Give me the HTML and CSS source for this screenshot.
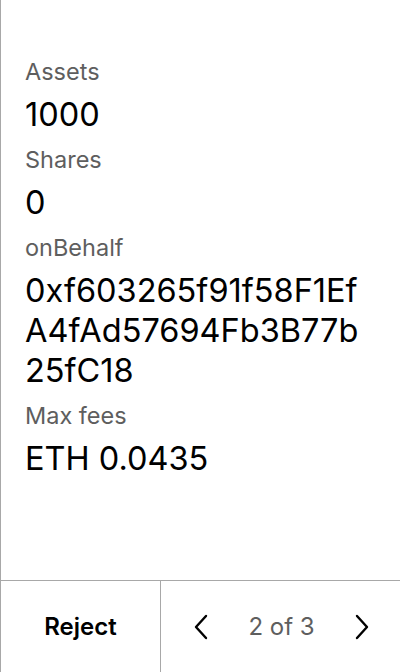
FILE: index.html
```html
<!DOCTYPE html>
<html>
<head>
<meta charset="utf-8">
<link rel="stylesheet" href="styles.css">
</head>
<body>
<div class="screen">
  <main class="content">
    <div class="field">
      <div class="label">Assets</div>
      <div class="value">1000</div>
    </div>
    <div class="field">
      <div class="label">Shares</div>
      <div class="value">0</div>
    </div>
    <div class="field">
      <div class="label">onBehalf</div>
      <div class="value">0xf603265f91f58F1Ef<br>A4fAd57694Fb3B77b<br>25fC18</div>
    </div>
    <div class="field">
      <div class="label">Max fees</div>
      <div class="value">ETH 0.0435</div>
    </div>
  </main>
  <footer class="footer">
    <button class="reject">Reject</button>
    <div class="pager">
      <svg class="chev" width="16" height="26" viewBox="0 0 16 26"><path d="M13 2 L3 13 L13 24" fill="none" stroke="#000" stroke-width="2.4" stroke-linecap="round" stroke-linejoin="round"/></svg>
      <span class="count">2 of 3</span>
      <svg class="chev" width="16" height="26" viewBox="0 0 16 26"><path d="M3 2 L13 13 L3 24" fill="none" stroke="#000" stroke-width="2.4" stroke-linecap="round" stroke-linejoin="round"/></svg>
    </div>
  </footer>
</div>
</body>
</html>
```
FILE: styles.css
```css
html, body {
  margin: 0;
  padding: 0;
  background: #fff;
}
body {
  font-family: Inter, "Noto Sans", sans-serif;
  color: #000;
}
.screen {
  width: 400px;
  height: 672px;
  box-sizing: border-box;
  border-left: 1px solid #a8a8a8;
  display: flex;
  flex-direction: column;
}
.content {
  flex: 1;
  padding: 57px 24px 0 24px;
  display: flex;
  flex-direction: column;
  gap: 10px;
}
.label {
  font-size: 23.5px;
  line-height: 30px;
  color: #5e5e5e;
  margin-bottom: 8px;
}
.value {
  font-size: 32.5px;
  line-height: 40px;
  color: #000;
}
.footer {
  height: 92px;
  box-sizing: border-box;
  border-top: 1px solid #a8a8a8;
  display: flex;
}
.reject {
  width: 160px;
  border: none;
  border-right: 1px solid #a8a8a8;
  background: #fff;
  font-family: Inter, "Noto Sans", sans-serif;
  font-size: 24px;
  font-weight: 600;
  color: #000;
  padding: 0;
}
.pager {
  flex: 1;
  display: flex;
  align-items: center;
  justify-content: space-between;
  padding: 0 30px 0 32px;
}
.count {
  font-size: 24px;
  color: #5e5e5e;
}
.chev {
  display: block;
}
```
